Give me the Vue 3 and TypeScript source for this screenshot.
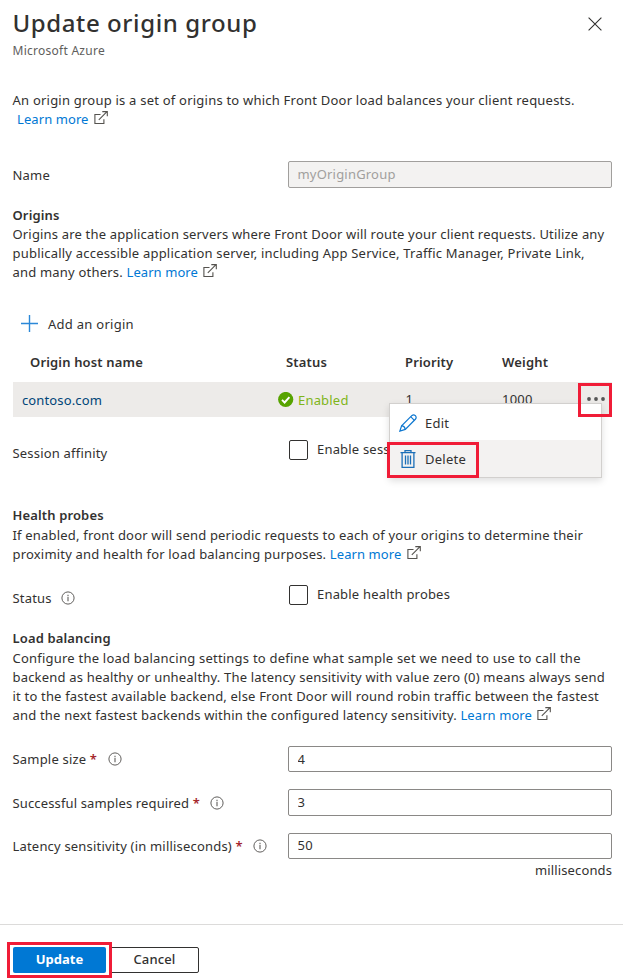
<script setup lang="ts">
import { ref, reactive, defineComponent, h } from 'vue'

interface Origin {
  host: string
  status: string
  priority: number
  weight: number
}

const groupName = ref('myOriginGroup')
const origins = ref<Origin[]>([{ host: 'contoso.com', status: 'Enabled', priority: 1, weight: 1000 }])
const sessionAffinity = ref(false)
const healthProbes = ref(false)
const balancing = reactive({ sampleSize: '4', successful: '3', latency: '50' })

const ExternalIcon = defineComponent({
  render: () =>
    h('svg', { class: 'ext', width: 14, height: 14, viewBox: '0 0 14 14', fill: 'none', stroke: '#55534f' }, [
      h('path', { d: 'M6.5 3.5H.9v9h9V8.200', 'stroke-width': 1.1 }),
      h('path', { d: 'M4.8 8.800 13 .6M8.300.6H13.300V5.300', 'stroke-width': 1.1 }),
    ]),
})

const InfoIcon = defineComponent({
  render: () =>
    h('svg', { class: 'info', width: 14, height: 14, viewBox: '0 0 14 14', fill: 'none', stroke: '#605e5c' }, [
      h('circle', { cx: 7, cy: 7, r: 6.1 }),
      h('path', { d: 'M7 5.800V10.300M7 3.700V4.900', 'stroke-width': 1.1 }),
    ]),
})
</script>

<template>
  <div class="panel">
    <header class="head">
      <div class="titles">
        <h1>Update origin group</h1>
        <p class="sub">Microsoft Azure</p>
      </div>
      <button class="close" aria-label="Close">
        <svg width="14" height="14" viewBox="0 0 14 14" fill="none" stroke="#323130" stroke-width="1.1">
          <path d="M.6.6 13.400 13.400M13.400.6.6 13.400" />
        </svg>
      </button>
    </header>

    <p class="text intro">
      An origin group is a set of origins to which Front Door load balances your client requests.<br />
      <a class="link indent">Learn more</a><ExternalIcon />
    </p>

    <div class="field name">
      <label>Name</label>
      <input v-model="groupName" class="tall" disabled />
    </div>

    <section class="origins">
      <h2>Origins</h2>
      <p class="text">
        <span class="l1">Origins are the application servers where Front Door will route your client requests. Utilize any</span><br />
        <span class="l2">publically accessible application server, including App Service, Traffic Manager, Private Link,</span><br />
        <span class="l4">and many others.</span> <a class="link">Learn more</a><ExternalIcon />
      </p>
      <button class="add">
        <svg width="17" height="17" viewBox="0 0 17 17" fill="none" stroke="#2b88d8" stroke-width="1.4">
          <path d="M8.500 0V17M0 8.500H17" />
        </svg>
        Add an origin
      </button>

      <div class="grid thead">
        <span>Origin host name</span>
        <span>Status</span>
        <span>Priority</span>
        <span>Weight</span>
      </div>
      <div v-for="o in origins" :key="o.host" class="grid row">
        <a class="host">{{ o.host }}</a>
        <span class="status">
          <svg width="16" height="16" viewBox="0 0 16 16">
            <circle cx="7.700" cy="7.500" r="7.600" fill="#57a300" />
            <path d="M4 7.900 6.600 10.500 11.400 5.100" fill="none" stroke="#fff" stroke-width="1.900" />
          </svg>
          <span>{{ o.status }}</span>
        </span>
        <span>{{ o.priority }}</span>
        <span>{{ o.weight }}</span>
        <button class="more" aria-label="More">
          <svg width="18" height="4" viewBox="0 0 18 4" fill="#555">
            <circle cx="2" cy="2" r="1.900" /><circle cx="9" cy="2" r="1.900" /><circle cx="16" cy="2" r="1.900" />
          </svg>
        </button>
        <div class="menu">
          <div class="item">
            <svg width="18" height="18" viewBox="0 0 18 18" fill="none" stroke="#0f78d0" stroke-width="1.200">
              <path d="M.9 17 2.600 11.700 13 1.400Q14.600.2 16.400 1.600 17.800 3.400 16.600 5L6.300 15.400Z" />
              <path d="M11.700 2.700 15.300 6.300M2.600 11.700Q5.700 12.200 6.300 15.400" />
            </svg>
            <span>Edit</span>
          </div>
          <div class="item active">
            <svg width="18" height="18" viewBox="0 0 18 18" fill="none" stroke="#1b6fb8" stroke-width="1.300">
              <path d="M1.500 2.700H16.500M6 2.500V.7H12V2.500M3.100 2.700V17.300H14.900V2.700" />
              <path d="M6.500 5.500V14.500M9 5.500V14.500M11.500 5.500V14.500" />
            </svg>
            <span>Delete</span>
          </div>
        </div>
      </div>

      <div class="field check affinity">
        <span class="lab">Session affinity</span>
        <label class="box"><input v-model="sessionAffinity" type="checkbox" />Enable sess</label>
      </div>
    </section>

    <section class="probes">
      <h2>Health probes</h2>
      <p class="text">
        If enabled, front door will send periodic requests to each of your origins to determine their<br />
        proximity and health for load balancing purposes. <a class="link">Learn more</a><ExternalIcon />
      </p>
      <div class="field check">
        <span class="lab">Status<InfoIcon /></span>
        <label class="box"><input v-model="healthProbes" type="checkbox" />Enable health probes</label>
      </div>
    </section>

    <section class="balance">
      <h2>Load balancing</h2>
      <p class="text">
        <span class="l3">Configure the load balancing settings to define what sample set we need to use to call the</span><br />
        backend as healthy or unhealthy. The latency sensitivity with value zero (0) means always send<br />
        it to the fastest available backend, else Front Door will round robin traffic between the fastest<br />
        and the next fastest backends within the configured latency sensitivity. <a class="link">Learn more</a><ExternalIcon />
      </p>
      <div class="fields">
        <div class="field">
          <label>Sample size <b>*</b><InfoIcon /></label>
          <input v-model="balancing.sampleSize" />
        </div>
        <div class="field">
          <label class="tight">Successful samples required <b>*</b><InfoIcon /></label>
          <input v-model="balancing.successful" class="tall" />
        </div>
        <div class="field">
          <label>Latency sensitivity (in milliseconds) <b>*</b><InfoIcon /></label>
          <input v-model="balancing.latency" class="raised" />
        </div>
      </div>
      <p class="unit">milliseconds</p>
    </section>

    <footer class="foot">
      <div class="mark"><button class="primary">Update</button></div>
      <button class="secondary">Cancel</button>
    </footer>
  </div>
</template>

<style>
body {
  background: #fff;
}
</style>

<style scoped>
.panel {
  box-sizing: border-box;
  width: 623px;
  height: 980px;
  overflow: hidden;
  background: #fff;
  color: #323130;
  font-family: 'Noto Sans', 'Open Sans', sans-serif;
  font-size: 13px;
  line-height: 19px;
  letter-spacing: 0.19px;
  display: flex;
  flex-direction: column;
}
h1,
h2,
p {
  margin: 0;
}
button,
input {
  font: inherit;
  letter-spacing: inherit;
  color: inherit;
  margin: 0;
  box-sizing: border-box;
}
button {
  background: none;
  border: 0;
  padding: 0;
}
.head {
  display: flex;
  justify-content: space-between;
  height: 91px;
  padding: 6px 21.5px 0 12.5px;
  box-sizing: border-box;
}
h1 {
  font-size: 24px;
  line-height: 34px;
  font-weight: 500;
  letter-spacing: 0.6px;
}
.sub {
  font-size: 12px;
  line-height: 22px;
  color: #605e5c;
  letter-spacing: 0.26px;
}
.close {
  height: 14px;
  margin-top: 11px;
}
.close svg {
  display: block;
}
.text {
  white-space: nowrap;
  padding-left: 12.5px;
}
.l1 {
  letter-spacing: 0.175px;
}
.l2 {
  letter-spacing: 0.205px;
}
.l4 {
  letter-spacing: 0.2px;
}
.intro,
.l3 {
  letter-spacing: 0.22px;
}
.link {
  color: #0078d4;
  letter-spacing: 0.08px;
}
.indent {
  margin-left: 4.5px;
}
.text :deep(.ext) {
  margin-left: 5.5px;
  vertical-align: -1px;
}
h2 {
  font-size: 13px;
  line-height: 19px;
  font-weight: 600;
  letter-spacing: 0.14px;
  padding-left: 12.5px;
}
.field {
  display: grid;
  grid-template-columns: 275.5px 324px;
  padding-left: 12.5px;
  align-items: center;
}
.field > label,
.lab {
  display: flex;
  align-items: center;
  white-space: pre;
}
.field > label.tight {
  letter-spacing: 0.14px;
  padding-top: 1px;
}
.field b {
  color: #a4262c;
  font-weight: 600;
}
.field :deep(.info) {
  margin-left: 10.5px;
}
.field > input {
  width: 324px;
  height: 26px;
  border: 1px solid #8a8886;
  border-radius: 2px;
  padding: 0 9px 0 8.5px;
  background: #fff;
}
.field > input.tall,
.field > input.raised {
  padding-bottom: 2px;
}
.field > input.tall {
  height: 27px;
}
.field > input:disabled {
  background: #f3f2f1;
  border-color: #a19f9d;
  color: #a19f9d;
  letter-spacing: 0.2px;
}
.name {
  margin-top: 32px;
}
.name label {
  padding-top: 2px;
}
.origins {
  margin-top: 18px;
}
.add {
  display: flex;
  align-items: center;
  gap: 10px;
  height: 24px;
  margin: 30px 0 0 21px;
  letter-spacing: 0.27px;
}
.add svg {
  margin-bottom: 2px;
}
.grid {
  display: grid;
  align-items: center;
}
.thead {
  height: 46px;
  padding: 6px 11px 0 30px;
  grid-template-columns: 256px 119px 97px 1fr;
  box-sizing: border-box;
  font-weight: 600;
  letter-spacing: 0.16px;
}
.row {
  position: relative;
  margin: 0 11px 0 13px;
  height: 35px;
  padding-left: 9px;
  background: #edebe9;
  grid-template-columns: 256px 127.5px 96.5px 76px 34px;
}
.host {
  color: #004578;
  padding-top: 2px;
  letter-spacing: 0.13px;
}
.status {
  display: flex;
  align-items: center;
  gap: 4px;
  color: #7fb51a;
}
.status span {
  padding-top: 2px;
}
.more {
  width: 34px;
  height: 34px;
  margin-top: 1px;
  padding: 0 0 2px 2px;
  border: 3px solid #f01c37;
  display: flex;
  align-items: center;
  justify-content: center;
  position: relative;
  z-index: 3;
}
.menu {
  position: absolute;
  z-index: 2;
  left: 376px;
  top: 21px;
  width: 213px;
  height: 75px;
  box-sizing: border-box;
  border: 1px solid #d2d0ce;
  background: #fff;
  box-shadow: 0 3px 7px rgba(0, 0, 0, 0.13);
}
.item {
  height: 36px;
  padding: 2px 0 0 9px;
  box-sizing: border-box;
  display: flex;
  align-items: center;
  gap: 8px;
}
.item.active {
  position: relative;
  height: 37px;
  padding-top: 0;
  background: #f3f2f1;
}
.item span {
  letter-spacing: 0.24px;
}
.item.active span {
  padding-top: 2px;
}
.item.active::after {
  content: '';
  position: absolute;
  left: -3px;
  top: 2px;
  width: 86px;
  height: 30px;
  border: 3px solid #f01c37;
}
.check {
  height: 26px;
}
.affinity {
  margin-top: 21px;
}
.check .lab {
  padding-top: 4px;
}
.check :deep(.info) {
  margin-left: 9px;
}
.box {
  display: flex;
  align-items: center;
  gap: 9px;
  padding: 0 0 4px 1px;
}
.box input {
  appearance: none;
  width: 19px;
  height: 20px;
  border: 1px solid #323130;
  border-radius: 2px;
  position: relative;
  top: 1px;
}
.probes {
  margin-top: 41px;
}
.probes h2 {
  line-height: 20px;
  padding-bottom: 1px;
}
.probes .field {
  margin-top: 19px;
}
.balance {
  margin-top: 19px;
}
.balance h2 {
  line-height: 20px;
  padding-bottom: 1px;
}
.fields {
  display: flex;
  flex-direction: column;
  gap: 17px;
  margin-top: 21px;
}
.unit {
  text-align: right;
  padding-right: 11px;
  margin-top: 2px;
  letter-spacing: 0.12px;
}
.foot {
  display: flex;
  align-items: flex-start;
  margin-top: 44px;
  border-top: 1px solid #dcdbda;
  padding: 17px 0 0 7px;
}
.mark {
  width: 105px;
  height: 36px;
  border: 3px solid #f01c37;
  box-sizing: border-box;
  padding: 2px 3px;
  z-index: 1;
  background: #fff;
}
.primary {
  display: block;
  width: 93px;
  height: 26px;
  padding-bottom: 2px;
  border-radius: 2px;
  background: #0078d4;
  color: #fff;
  font-weight: 700;
  letter-spacing: 0;
}
.secondary {
  width: 89px;
  height: 26px;
  margin: 5px 0 0 -2px;
  padding-bottom: 2px;
  border: 1px solid #323130;
  border-radius: 2px;
  font-weight: 500;
  letter-spacing: 0.15px;
}
</style>
